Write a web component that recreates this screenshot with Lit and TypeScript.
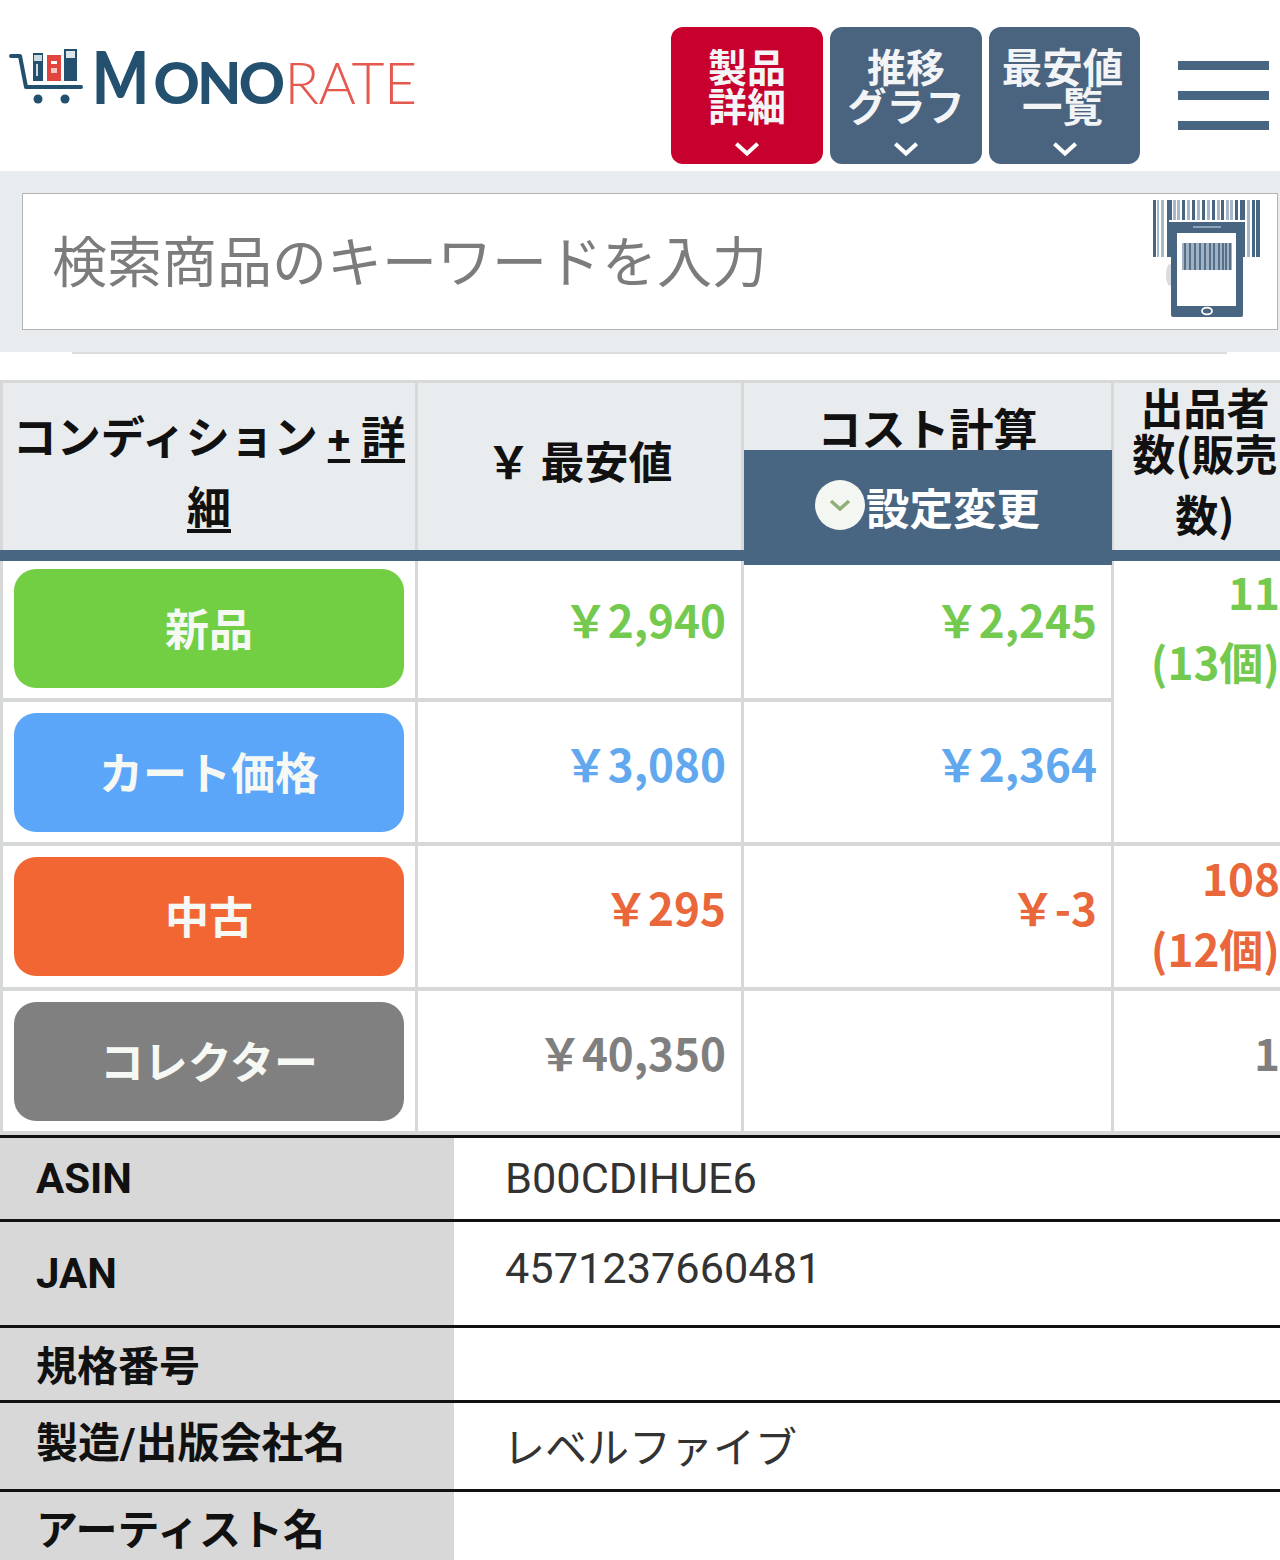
import { LitElement, html, css, svg } from "lit";
import { customElement } from "lit/decorators.js";

const chevron = svg`<svg class="chev" viewBox="0 0 30 18"><path d="M3 3 L15 14 L27 3" fill="none" stroke="#fff" stroke-width="4.5"/></svg>`;

const bars: [number, number, boolean][] = [
  [0,3,true],[4,2,false],[8,3,false],[14,5,true],[20,3,false],[24,3,false],[29,3,true],[34,3,false],[39,3,true],[44,3,false],
  [49,3,true],[54,3,false],[59,3,true],[64,3,false],[68,3,true],[73,3,false],[77,3,false],[82,3,true],[87,5,true],[94,3,false],[99,3,true],[103,4,true],
];
const innerBars = [31,36,41,46,51,56,60,65,69,72,76];

@customElement("app-root")
export class AppRoot extends LitElement {
  static styles = css`
    :host { display: block; width: 1280px; height: 1560px; overflow: hidden; background: #fff;
      font-family: "Noto Sans CJK JP", "Noto Sans", sans-serif; color: #1a1a1a; }
    .top { height: 171px; display: flex; align-items: flex-start; }
    .logo { width: 671px; display: flex; align-items: flex-start; padding: 47px 0 0 9px; box-sizing: border-box; height: 100%; }
    .logo svg { width: 76px; height: 60px; flex: none; }
    .brand { margin-left: 7px; margin-top: -2px; display: flex; align-items: baseline; height: 62px; line-height: 62px; white-space: nowrap; color: #23506f; font-family: Lato, Roboto, sans-serif; font-weight: 900; }
    .m { font-size: 73px; display: inline-block; transform: scaleX(0.82); transform-origin: left center; margin-right: -8px; }
    .ono { font-size: 57px; letter-spacing: -2.5px; }
    .rate { font-size: 57px; font-weight: 300; color: #e4584f; letter-spacing: -0.5px; margin-left: 2px; }
    .navs { display: flex; gap: 7px; padding-top: 27px; }
    .nav { width: 152px; height: 137px; border-radius: 12px; background: #4a6480; color: #f2f4f6; font-weight: 700; font-size: 39px; line-height: 39px; text-align: center; display: flex; flex-direction: column; align-items: center; padding-top: 19px; box-sizing: border-box; }
    .nav.red { background: #c8002d; }
    .nav.wide { width: 151px; font-size: 40.5px; }
    .nav.wide .t { padding-right: 4px; }
    .nav .t { height: 91px; white-space: nowrap; }
    .chev { width: 28px; height: 16px; margin-top: 4px; flex: none; }
    .burger { margin-left: 38px; padding-top: 61px; display: flex; flex-direction: column; gap: 21px; }
    .burger i { display: block; width: 91px; height: 9px; background: #486581; }
    .searchband { height: 181px; background: #e9ecef; padding: 22px 2px 0 22px; box-sizing: border-box; }
    .search { height: 137px; background: #fff; border: 1px solid #b4b4b4; box-sizing: border-box; display: flex; align-items: center; justify-content: space-between; padding: 0 16px 0 29px; color: #7c7c7c; font-size: 55px; }
    .search span { padding-bottom: 8px; }
    .search svg { width: 108px; height: 118px; flex: none; align-self: flex-start; margin-top: 6px; }
    .rule { margin: 0 53px 0 72px; height: 2px; background: #dcdcdc; }
    .grid { margin-top: 26px; display: grid; grid-template-columns: 412px 323px 367px 190px; grid-template-rows: 167px 3px 137px 140px 141px 140px; column-gap: 3px; row-gap: 4px; padding: 3px 0 4px 3px; background: #d7d9d9; width: 1280px; box-sizing: border-box; }
    .h { background: #e9ecef; color: #111; font-weight: 700; font-size: 44px; text-align: center; line-height: 70px; display: flex; align-items: center; justify-content: center; box-sizing: border-box; }
    .h u { text-underline-offset: 5px; }
    .h1 { padding: 17px 2px 0; display: block; }
    .plus { margin-right: 11px; font-family: Roboto, sans-serif; font-size: 41px; line-height: 1; }
    .low { padding-bottom: 14px; }
    .sep { grid-column: 1 / -1; height: 11px; background: #486581; margin: -4px 0 -4px -3px; }
    .cost { flex-direction: column; justify-content: flex-end; line-height: 46px; }
    .cost .lbl { height: 67px; display: flex; align-items: flex-end; justify-content: center; white-space: nowrap; }
    .cbtn { background: #486581; color: #fff; width: calc(100% + 1px); height: 115px; margin-bottom: -15px; z-index: 1; display: flex; align-items: flex-start; justify-content: center; padding-top: 30px; box-sizing: border-box; line-height: 54px; font-size: 43.5px; }
    .dot { width: 50px; height: 50px; border-radius: 50%; background: #f4f6f2; display: flex; align-items: center; justify-content: center; margin-right: 1px; flex: none; }
    .dot svg { width: 24px; height: 14px; }
    .sell { align-self: flex-start; width: 174px; font-size: 43px; line-height: 46px; display: flex; flex-direction: column; align-items: center; white-space: nowrap; margin-right: 8px; }
    .sell .last { margin-top: 15px; }
    .c { background: #fff; display: flex; font-weight: 700; font-size: 44px; box-sizing: border-box; }
    .pc { padding: 0 11px; align-items: center; }
    .pc.first { padding-bottom: 2px; }
    .pill { width: 100%; height: 119px; border-radius: 22px; color: #f6f8f4; display: flex; align-items: center; justify-content: center; font-size: 44px; padding-bottom: 3px; box-sizing: border-box; }
    .price { justify-content: flex-end; padding: 31px 15px 0 0; line-height: 60px; align-items: flex-start; }
    .price.first { padding-top: 28px; }
    .price.c3 { padding-right: 14px; }
    .count { flex-direction: column; align-items: flex-end; line-height: 58px; gap: 12px; width: 166px; padding-top: 1px; white-space: nowrap; }
    .count.mid { padding-top: 2px; gap: 13px; }
    .count.one { padding-top: 31px; line-height: 60px; }
    .span2 { grid-row: span 2; }
    .g { color: #74c94f; } .b { color: #62a8ee; } .o { color: #e9673a; } .y { color: #7f7f7f; }
    .bg { background: #72ce42; } .bb { background: #5ba6f8; } .bo { background: #f26634; } .by { background: #808080; }
    .kv { border-top: 3px solid #111; font-family: Roboto, "Noto Sans CJK JP", sans-serif; }
    .kr { display: grid; grid-template-columns: 454px 1fr; grid-template-rows: 100%; border-bottom: 3px solid #111; }
    .k { background: #d8d8d8; font-weight: 700; font-size: 42px; padding-left: 36px; color: #111; white-space: nowrap; }
    .v { font-size: 43.3px; padding-left: 51px; color: #333; white-space: nowrap; }
    .jan { line-height: 93px; }
    .r1 { height: 81px; line-height: 81px; }
    .r2 { height: 103px; line-height: 103px; }
    .r3 { height: 72px; line-height: 78px; }
    .r3 .k { font-size: 41px; }
    .r4 { height: 86px; line-height: 82px; }
    .r4 .v { line-height: 92px; padding-left: 49px; font-size: 42px; }
    .r5 { height: 80px; line-height: 78px; }
  `;

  private logo() {
    return html`<svg viewBox="0 0 76 60">
      <path d="M2 9 H11 L17 40 H72" fill="none" stroke="#23506f" stroke-width="4" stroke-linecap="round" stroke-linejoin="round"/>
      <circle cx="29" cy="52" r="4.5" fill="#23506f"/><circle cx="56" cy="52" r="4.5" fill="#23506f"/>
      <rect x="24" y="6" width="10" height="28" fill="#23506f"/><rect x="25" y="8" width="8" height="6" fill="#cfd9e0"/><rect x="27" y="17" width="2" height="12" fill="#cfd9e0"/>
      <rect x="38" y="8" width="14" height="26" fill="#e2453d"/><rect x="42" y="14" width="6" height="3" fill="#fff"/><rect x="42" y="21" width="6" height="5" fill="#f6c9c5"/>
      <rect x="55" y="2" width="13" height="32" fill="#23506f"/><rect x="57" y="4" width="9" height="7" fill="#dfe6eb"/>
    </svg>`;
  }

  private scanner() {
    return html`<svg viewBox="0 0 108 118">
      ${bars.map(([x, w, d]) => svg`<rect x="${x}" y="0" width="${w}" height="57" fill="${d ? "#486581" : "#a9b9c8"}"/>`)}
      <ellipse cx="17" cy="75" rx="4" ry="11" fill="#d9dcdf"/>
      <rect x="16" y="20" width="76" height="2" fill="#fff"/>
      <path d="M18 22 H90 V115 a2 2 0 0 1 -2 2 H20 a2 2 0 0 1 -2 -2 Z" fill="#486581"/>
      <rect x="40" y="26" width="28" height="2" fill="#8ea3b7"/>
      <rect x="24" y="33" width="59" height="73" fill="#fff"/>
      <rect x="29" y="43" width="50" height="27" fill="#a0b2c3"/>
      ${innerBars.map((x) => svg`<rect x="${x}" y="43" width="2" height="27" fill="#56708a"/>`)}
      <ellipse cx="54" cy="111" rx="5" ry="3.4" fill="none" stroke="#fff" stroke-width="1.8"/>
    </svg>`;
  }

  render() {
    const dotChev = svg`<svg viewBox="0 0 24 14"><path d="M3 3 L12 11 L21 3" fill="none" stroke="#8fb07a" stroke-width="3.5"/></svg>`;
    return html`
      <div class="top">
        <div class="logo">${this.logo()}
          <div class="brand"><span class="m">M</span><span class="ono">ONO</span><span class="rate">RATE</span></div>
        </div>
        <div class="navs">
          <div class="nav red"><div class="t">製品<br>詳細</div>${chevron}</div>
          <div class="nav"><div class="t">推移<br>グラフ</div>${chevron}</div>
          <div class="nav wide"><div class="t">最安値<br>一覧</div>${chevron}</div>
        </div>
        <div class="burger"><i></i><i></i><i></i></div>
      </div>
      <div class="searchband">
        <div class="search"><span>検索商品のキーワードを入力</span>${this.scanner()}</div>
      </div>
      <div class="rule"></div>
      <div class="grid">
        <div class="h h1">コンディション <u><span class="plus">+</span>詳細</u></div>
        <div class="h low">￥ 最安値</div>
        <div class="h cost"><div class="lbl">コスト計算</div><div class="cbtn"><span class="dot">${dotChev}</span>設定変更</div></div>
        <div class="h"><div class="sell"><span>出品者</span><span>数(販売</span><span class="last">数)</span></div></div>
        <div class="sep"></div>

        <div class="c pc first"><div class="pill bg">新品</div></div>
        <div class="c price first g">￥2,940</div>
        <div class="c price first c3 g">￥2,245</div>
        <div class="c count g span2"><span>11</span><span>(13個)</span></div>

        <div class="c pc"><div class="pill bb">カート価格</div></div>
        <div class="c price b">￥3,080</div>
        <div class="c price c3 b">￥2,364</div>

        <div class="c pc"><div class="pill bo">中古</div></div>
        <div class="c price o">￥295</div>
        <div class="c price c3 o">￥-3</div>
        <div class="c count mid o"><span>108</span><span>(12個)</span></div>

        <div class="c pc"><div class="pill by">コレクター</div></div>
        <div class="c price y">￥40,350</div>
        <div class="c price c3 y"></div>
        <div class="c count one y"><span>1</span></div>
      </div>
      <div class="kv">
        <div class="kr r1"><div class="k">ASIN</div><div class="v">B00CDIHUE6</div></div>
        <div class="kr r2"><div class="k">JAN</div><div class="v jan">4571237660481</div></div>
        <div class="kr r3"><div class="k">規格番号</div><div class="v"></div></div>
        <div class="kr r4"><div class="k">製造/出版会社名</div><div class="v">レベルファイブ</div></div>
        <div class="kr r5"><div class="k">アーティスト名</div><div class="v"></div></div>
      </div>
    `;
  }
}
